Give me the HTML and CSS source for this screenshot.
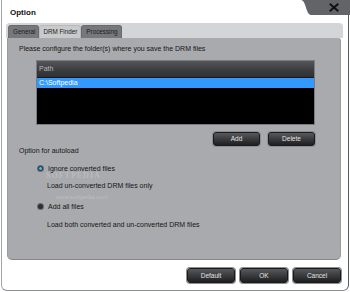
FILE: index.html
```html
<!DOCTYPE html>
<html>
<head>
<meta charset="utf-8">
<link rel="stylesheet" href="styles.css">
</head>
<body>
<div class="frame">
  <div class="titlebar">
    <div class="title">Option</div>
    <svg class="close" width="50" height="16" viewBox="0 0 50 16">
      <path d="M0 0 C5 0 5 15 10 15 L50 15 L50 0 Z" fill="#636468"/>
      <path d="M29.5 4.5 L36.5 10.5 M36.5 4.5 L29.5 10.5" stroke="#111" stroke-width="2" stroke-linecap="square"/>
    </svg>
  </div>
  <div class="tabstrip">
    <div class="tab">General</div>
    <div class="tab active">DRM Finder</div>
    <div class="tab">Processing</div>
  </div>
  <div class="panel">
    <div class="intro">Please configure the folder(s) where you save the DRM files</div>
    <div class="listbox">
      <div class="list-head">Path</div>
      <div class="list-row">C:\Softpedia</div>
    </div>
    <div class="list-actions">
      <div class="btn">Add</div>
      <div class="btn">Delete</div>
    </div>
    <div class="section">Option for autoload</div>
    <div class="radio-row first">
      <span class="radio on"></span><span>Ignore converted files</span>
    </div>
    <div class="hint">Load un-converted DRM files only</div>
    <div class="radio-row second">
      <span class="radio off"></span><span>Add all files</span>
    </div>
    <div class="hint last">Load both converted and un-converted DRM files</div>
    <div class="watermark">SOFTPEDIA</div>
    <div class="watermark small">www.softpedia.com</div>
  </div>
  <div class="footer">
    <div class="btn big">Default</div>
    <div class="btn big">OK</div>
    <div class="btn big">Cancel</div>
  </div>
</div>
</body>
</html>
```
FILE: styles.css
```css
html, body {
  margin: 0;
  padding: 0;
  width: 350px;
  height: 292px;
  background: #ffffff;
  overflow: hidden;
}
body {
  font-family: "Liberation Sans", Arial, sans-serif;
  color: #151515;
}
.frame {
  margin-left: 1px;
  width: 348px;
  height: 291px;
  box-sizing: border-box;
  border-left: 1px solid #a2a3a5;
  border-right: 1px solid #5a5b5e;
  border-bottom: 1px solid #8d8e91;
  border-radius: 0 0 6px 6px;
  background: #fff;
  display: flex;
  flex-direction: column;
}
.titlebar {
  height: 23px;
  display: flex;
  align-items: flex-start;
}
.title {
  font-weight: bold;
  font-size: 8px;
  line-height: 10px;
  padding-top: 8px;
  padding-left: 8px;
  color: #111;
}
.close {
  margin-left: auto;
  margin-right: -3px;
  display: block;
}
.tabstrip {
  margin: 0 5px 0 4px;
  height: 15px;
  box-sizing: border-box;
  padding: 2px 0 0 2px;
  background: #d4d5d7;
  border-radius: 4px 4px 0 0;
  display: flex;
  align-items: flex-end;
}
.tab {
  height: 13px;
  font-size: 6.3px;
  padding: 0 3px 0 4px;
  background: #77787b;
  color: #1c1c1c;
  border-radius: 3px 3px 0 0;
  box-sizing: border-box;
  border: 1px solid #6a6b6e;
  border-bottom: none;
  line-height: 12px;
}
.tab.active {
  background: #c9cacc;
  border-color: #b9babc;
  padding: 0 3px 0 3px;
}
.panel {
  position: relative;
  margin: 0 7px 0 5px;
  height: 222px;
  box-sizing: border-box;
  background: #a9aaad;
  border: 1px solid #9a9b9e;
  border-bottom-color: #858689;
  border-top: none;
  border-radius: 0 3px 5px 5px;
  padding: 6px 0 0 11px;
  font-size: 7px;
}
.intro {
  line-height: 9px;
  height: 9px;
}
.listbox {
  margin: 7px 0 0 17px;
  width: 279px;
  height: 65px;
  box-sizing: border-box;
  background: #000;
  border: 1px solid #7b7c7f;
}
.list-head {
  height: 16px;
  line-height: 16px;
  padding-left: 2px;
  color: #b7b8ba;
  background: linear-gradient(#55565a, #3a3b3e 60%, #2f3032);
  border-bottom: 1px solid #1a1a1a;
}
.list-row {
  height: 10px;
  line-height: 10px;
  padding-left: 2px;
  background: #3399ff;
  color: #fff;
}
.list-actions {
  margin: 7px 0 0 0;
  width: 296px;
  display: flex;
  justify-content: flex-end;
  gap: 8px;
}
.btn {
  width: 47px;
  height: 14px;
  box-sizing: border-box;
  border: 1px solid #1a1a1b;
  box-shadow: 0 0 0 1px #8e8f92;
  border-radius: 3px;
  background: linear-gradient(#58595c, #3a3b3d 50%, #1f1f21);
  color: #e4e4e4;
  font-size: 6.5px;
  line-height: 12px;
  text-align: center;
}
.section {
  line-height: 9px;
  height: 9px;
}
.radio-row {
  display: flex;
  align-items: center;
  gap: 5px;
  margin-left: 19px;
  height: 9px;
  line-height: 9px;
}
.radio-row.first { margin-top: 9px; }
.radio-row.second { margin-top: 12px; }
.radio {
  width: 5px;
  height: 5px;
  border-radius: 50%;
  box-sizing: border-box;
  flex: none;
}
.radio.on {
  background: #36c3f5;
  border: 1px solid #2a2b2e;
  box-shadow: 0 0 0 1px #6b6c70;
}
.radio.off {
  background: #2e2f32;
  box-shadow: 0 0 0 1px #6b6c70;
}
.hint {
  margin: 8px 0 0 28px;
  line-height: 9px;
  height: 9px;
}
.hint.last { margin-top: 9px; }
.watermark {
  position: absolute;
  left: 38px;
  top: 134px;
  font-family: "Liberation Serif", serif;
  font-size: 8px;
  line-height: 7px;
  letter-spacing: 1px;
  color: rgba(255, 255, 255, 0.22);
  font-weight: bold;
}
.watermark.small {
  left: 48px;
  top: 156px;
  font-size: 6px;
  line-height: 7px;
  letter-spacing: 0;
  font-weight: normal;
  font-family: "Liberation Sans", sans-serif;
  color: rgba(255, 255, 255, 0.25);
}
.footer {
  display: flex;
  justify-content: flex-end;
  gap: 5px;
  padding: 8px 7px 0 0;
}
.btn.big {
  width: 48px;
  height: 15px;
  line-height: 13px;
  font-size: 6.5px;
}
```
